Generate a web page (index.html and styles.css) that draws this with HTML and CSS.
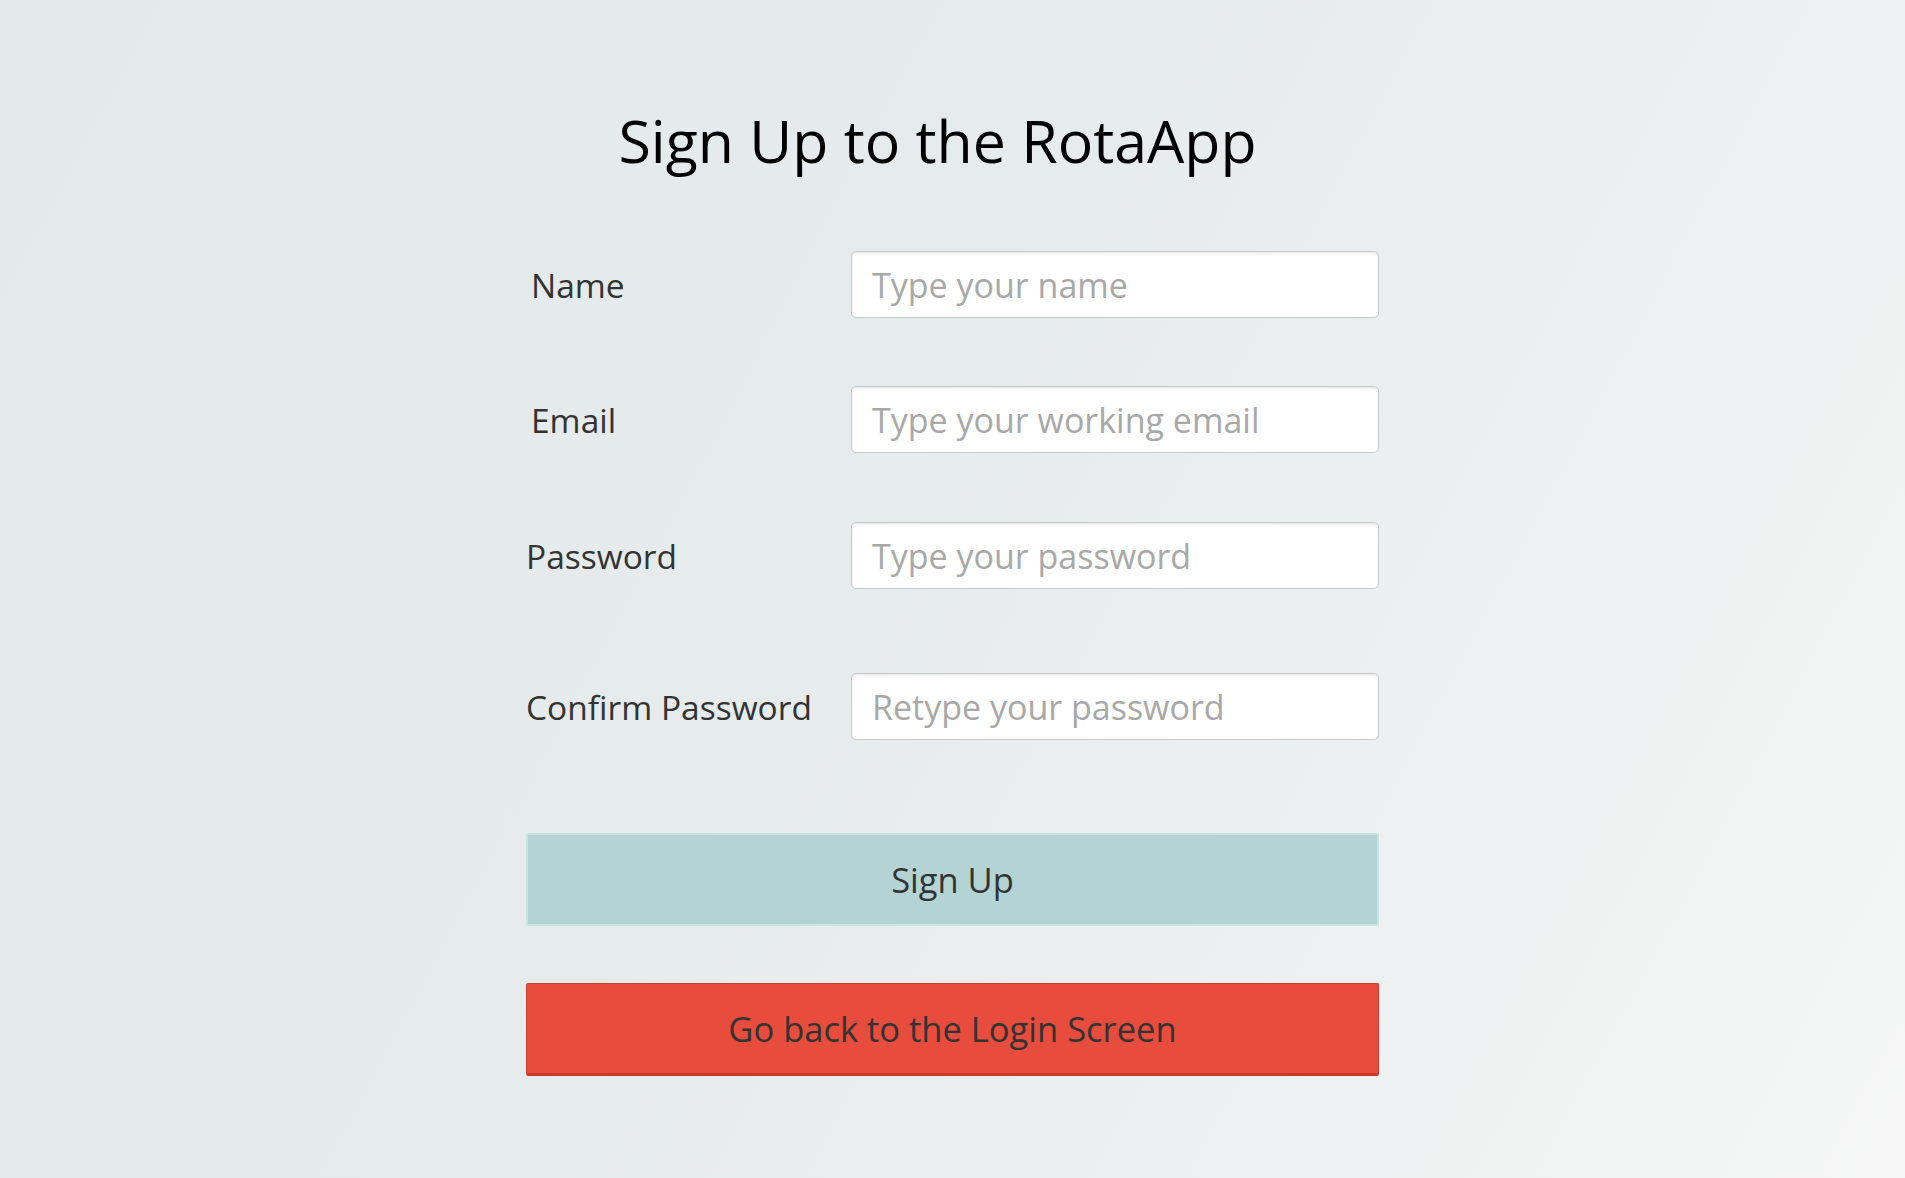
FILE: index.html
```html
<!DOCTYPE html>
<html lang="en">
<head>
<meta charset="utf-8">
<title>Sign Up - RotaApp</title>
<link rel="stylesheet" href="styles.css">
</head>
<body>
<main class="page">
  <h1 class="title">Sign Up to the RotaApp</h1>
  <form class="form">
    <div class="row row-name">
      <label class="label label-indent" for="name">Name</label>
      <input class="input" id="name" type="text" placeholder="Type your name">
    </div>
    <div class="row row-email">
      <label class="label label-indent" for="email">Email</label>
      <input class="input" id="email" type="email" placeholder="Type your working email">
    </div>
    <div class="row row-password">
      <label class="label" for="password">Password</label>
      <input class="input" id="password" type="password" placeholder="Type your password">
    </div>
    <div class="row row-confirm">
      <label class="label" for="confirm">Confirm Password</label>
      <input class="input" id="confirm" type="password" placeholder="Retype your password">
    </div>
    <button class="btn btn-signup" type="button">Sign Up</button>
    <button class="btn btn-back" type="button">Go back to the Login Screen</button>
  </form>
</main>
</body>
</html>
```

FILE: styles.css
```css
html, body {
  margin: 0;
  padding: 0;
}

body {
  min-height: 100vh;
  font-family: "Open Sans", "Noto Sans", "Liberation Sans", sans-serif;
  color: #333;
  background: linear-gradient(118deg, #e2ebeb 0%, #e6ebec 45%, #eef1f1 75%, #f6f6f6 100%);
}

.page {
  display: flex;
  flex-direction: column;
  align-items: center;
  padding-top: 107px;
}

.title {
  margin: 0 30px 0 0;
  font-size: 59px;
  font-weight: 400;
  line-height: 66px;
  color: #000;
}

.form {
  width: 853px;
  margin-top: 78px;
  display: flex;
  flex-direction: column;
}

.row {
  display: flex;
  align-items: center;
  height: 67px;
}

.row-email {
  margin-top: 68px;
}

.row-password {
  margin-top: 69px;
}

.row-confirm {
  margin-top: 84px;
}

.label {
  width: 325px;
  flex: none;
  font-size: 33.5px;
  color: #333;
}

.label-indent {
  padding-left: 5px;
  width: 320px;
}

.input {
  box-sizing: border-box;
  width: 528px;
  height: 67px;
  margin: 0;
  padding: 0 20px;
  border: 1px solid #c8c8c8;
  border-radius: 5px;
  background: #fff;
  box-shadow: inset 0 2px 3px rgba(0, 0, 0, 0.08);
  font-family: inherit;
  font-size: 34px;
  color: #555;
  outline: none;
}

.input::placeholder {
  color: #a8a8a8;
}

.btn {
  box-sizing: border-box;
  width: 853px;
  height: 93px;
  margin: 0;
  padding: 0;
  font-family: inherit;
  font-size: 34.5px;
  color: #333;
  cursor: pointer;
}

.btn-signup {
  margin-top: 93px;
  background: #b4d3d5;
  border: 2px solid #c7e4e0;
  border-radius: 2px;
}

.btn-back {
  margin-top: 57px;
  background: #e74c3c;
  border: 1px solid #cf3d2e;
  border-bottom: 3px solid #c9392b;
  border-radius: 2px;
}
```
